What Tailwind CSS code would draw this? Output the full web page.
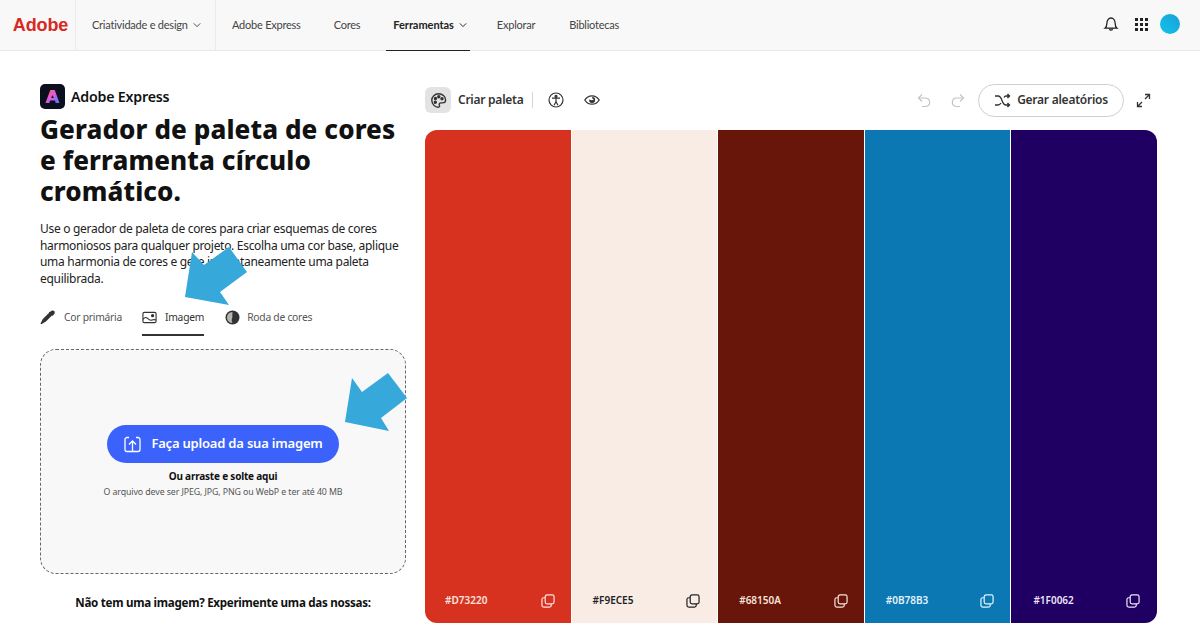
<!DOCTYPE html>
<html lang="pt">
<head>
<meta charset="UTF-8">
<meta name="viewport" content="width=device-width, initial-scale=1.0">
<title>Gerador de paleta de cores</title>
<script src="https://cdn.jsdelivr.net/npm/@tailwindcss/browser@4"></script>
</head>
<body class="relative h-[623px] overflow-hidden bg-white font-['Noto_Sans',sans-serif] text-[#222]">

<!-- top nav -->
<header class="flex h-[51px] items-stretch border-b border-[#e8e8e8] bg-[#f8f8f8] font-['Lato',sans-serif] text-[11px] tracking-[-0.23px] text-[#444]">
  <div class="flex w-[76px] items-center justify-center border-r border-[#ebebeb] pl-[6px] font-['Liberation_Sans',sans-serif] text-[18px] font-bold tracking-[-0.1px] text-[#d8291f]">Adobe</div>
  <div class="flex w-[140px] items-center gap-[5px] border-r border-[#ebebeb] pl-[16px]">
    Criatividade e design
    <svg class="h-2 w-2" viewBox="0 0 10 10" fill="none" stroke="currentColor" stroke-width="1.2"><path d="M1 3l4 4 4-4"/></svg>
  </div>
  <nav class="flex items-stretch">
    <a class="ml-[16px] flex items-center">Adobe Express</a>
    <a class="ml-[33px] flex items-center">Cores</a>
    <a class="-mb-px ml-[26px] flex items-center gap-[5px] border-b border-[#222] pr-[3px] pl-[7px] font-bold tracking-[-0.05px] text-[#222]">
      Ferramentas
      <svg class="h-2 w-2" viewBox="0 0 10 10" fill="none" stroke="currentColor" stroke-width="1.2"><path d="M1 3l4 4 4-4"/></svg>
    </a>
    <a class="ml-[27px] flex items-center">Explorar</a>
    <a class="ml-[34px] flex items-center">Bibliotecas</a>
  </nav>
  <div class="ml-auto flex items-center pr-[20px] pb-[2px]">
    <svg class="h-[16px] w-[16px] text-[#222]" viewBox="0 0 16 16" fill="none" stroke="currentColor" stroke-width="1.3"><path d="M2 12.2c1.2-1 1.8-2 1.800-4.500C3.800 4.500 5.600 2 8 2s4.200 2.500 4.200 5.700c0 2.500.6 3.500 1.800 4.500z"/><path d="M6.500 12.500c0 1 .7 1.700 1.500 1.700s1.500-.7 1.500-1.700"/></svg>
    <svg class="ml-[15px] h-[15px] w-[15px] text-[#222]" viewBox="0 0 15 15" fill="currentColor"><rect x="1" y="1" width="3" height="3"/><rect x="6" y="1" width="3" height="3"/><rect x="11" y="1" width="3" height="3"/><rect x="1" y="6" width="3" height="3"/><rect x="6" y="6" width="3" height="3"/><rect x="11" y="6" width="3" height="3"/><rect x="1" y="11" width="3" height="3"/><rect x="6" y="11" width="3" height="3"/><rect x="11" y="11" width="3" height="3"/></svg>
    <div class="ml-[11px] h-[20px] w-[20px] rounded-full bg-gradient-to-tr from-[#10c4e8] to-[#1a9fd8]"></div>
  </div>
</header>

<main class="flex gap-[19px] pl-[40px]">
  <!-- left column -->
  <section class="w-[366px] shrink-0 pt-[33px]">
    <div class="flex items-center gap-[6px]">
      <div class="flex h-[25px] w-[25px] items-center justify-center rounded-[5px] bg-[#0b0f1e]">
        <svg class="h-[15px] w-[15px]" viewBox="0 0 15 15"><defs><linearGradient id="expr" x1="0" y1="0" x2="1" y2="1"><stop offset="0" stop-color="#ff6a3e"/><stop offset=".45" stop-color="#e65ad8"/><stop offset="1" stop-color="#4a7bff"/></linearGradient></defs><path d="M5.300 1h4.400L14.500 14h-3.800L10 11.500H5L4.300 14H.5zM7.500 6 6.200 9h2.600z" fill="url(#expr)"/></svg>
      </div>
      <span class="text-[14.200px] font-semibold tracking-[-0.2px] text-[#111]">Adobe Express</span>
    </div>
    <h1 class="mt-[5px] text-[26px] leading-[31px] font-extrabold tracking-[0.1px] text-[#111]">Gerador de paleta de cores e ferramenta círculo cromático.</h1>
    <p class="mt-[14px] text-[12px] leading-[16.500px] tracking-[-0.3px] text-[#222]">Use o gerador de paleta de cores para criar esquemas de cores harmoniosos para qualquer projeto. Escolha uma cor base, aplique uma harmonia de cores e gere instantaneamente uma paleta equilibrada.</p>

    <div class="mt-[14px] flex h-[35px] items-stretch text-[10.300px] tracking-[-0.25px] text-[#555]">
      <div class="flex items-center gap-[7px] pb-[2px]">
        <svg class="h-[17px] w-[17px] text-[#333]" viewBox="0 0 17 17" fill="currentColor"><path d="M10.200 2.800c1.300-1.500 3-1.800 4-.8s.7 2.700-.8 4l-1 .9-.5-.5-5.200 5.400c-.9.9-1.700 1.500-3 1.900l-2.200 1.600-1.100-1.100 1.500-2.300c.4-1.300 1-2.100 1.900-3l5.400-5.200-.5-.5z"/></svg>
        Cor primária
      </div>
      <div class="ml-[20px] flex items-center gap-[8px] border-b-2 border-[#333] text-[#333]">
        <svg class="h-[15px] w-[15px]" viewBox="0 0 16 16" fill="none" stroke="currentColor" stroke-width="1.200"><rect x="1" y="2.500" width="14" height="11" rx="1.500"/><path d="M1 10c2-2.500 3.500-2.500 5-1s3 2.300 4.500 1.700 2.500-1 4.500 0"/><circle cx="11.300" cy="6" r="1.100" fill="currentColor"/></svg>
        Imagem
      </div>
      <div class="ml-[21px] flex items-center gap-[7px] pb-[2px]">
        <svg class="h-[15px] w-[15px]" viewBox="0 0 15 15"><circle cx="7.500" cy="7.500" r="7" fill="#333"/><path d="M7.500 2a5.500 5.500 0 0 0 0 11c-1-2-1-3-.2-5.500z" fill="#b5b5b5"/></svg>
        Roda de cores
      </div>
    </div>

    <div class="mt-[13px] flex h-[225px] flex-col items-center rounded-[16px] border border-dashed border-[#666] bg-[#f8f8f8] pt-[75px]">
      <button class="flex h-[38px] w-[232px] items-center justify-center gap-[9px] rounded-full bg-[#3b63fb] text-[13px] font-semibold tracking-[-0.2px] text-white">
        <svg class="h-[19px] w-[19px]" viewBox="0 0 19 19" fill="none" stroke="currentColor" stroke-width="1.300"><path d="M6 2.500H4A2 2 0 0 0 2 4.500v10a2 2 0 0 0 2 2h11a2 2 0 0 0 2-2v-10a2 2 0 0 0-2-2h-2"/><path d="M9.500 16V6M6 9.500l3.500-3.500 3.500 3.500"/></svg>
        Faça upload da sua imagem
      </button>
      <p class="mt-[6px] text-[10px] leading-[14px] font-bold tracking-[-0.2px] text-[#111]">Ou arraste e solte aqui</p>
      <p class="mt-[3px] text-[8.800px] leading-[13px] tracking-[-0.1px] text-[#555]">O arquivo deve ser JPEG, JPG, PNG ou WebP e ter até 40 MB</p>
    </div>

    <p class="mt-[21px] text-center text-[11.600px] leading-[16px] font-bold tracking-[-0.28px] text-[#111]">Não tem uma imagem? Experimente uma das nossas:</p>
  </section>

  <!-- palette column -->
  <section class="w-[732px] shrink-0">
    <div class="flex h-[79px] items-center pt-[28px] pr-[6px] pb-[9px]">
      <div class="flex h-[26px] w-[26px] items-center justify-center rounded-[6px] bg-[#e3e3e3]">
        <svg class="h-[17px] w-[17px] text-[#333]" viewBox="0 0 17 17" fill="none" stroke="currentColor" stroke-width="1.400"><path d="M8.500 1.800C4.700 1.800 1.800 4.700 1.800 8.300c0 3.700 3 6.900 6.400 6.900 1.500 0 1.700-1 1.200-2-.6-1.200.1-2.300 1.500-2.300h1.700c1.700 0 3-1 3-2.900 0-3.500-3.300-6.200-7.100-6.200z"/><circle cx="5.500" cy="6.500" r="1" fill="currentColor"/><circle cx="8.800" cy="4.800" r="1" fill="currentColor"/><circle cx="12" cy="6.800" r="1" fill="currentColor"/><circle cx="5.300" cy="10.300" r="1" fill="currentColor"/></svg>
      </div>
      <span class="ml-[7px] text-[12px] font-semibold tracking-[-0.25px] text-[#333]">Criar paleta</span>
      <div class="ml-[9px] h-[16px] w-px bg-[#d5d5d5]"></div>
      <svg class="ml-[15px] h-[16px] w-[16px] text-[#333]" viewBox="0 0 16 16" fill="none" stroke="currentColor" stroke-width="1.200"><circle cx="8" cy="8" r="7"/><circle cx="8" cy="4.300" r="1" fill="currentColor"/><path d="M4 6.200h8M8 6.200v3.500M8 9.700l-2 3.500M8 9.700l2 3.500"/></svg>
      <svg class="ml-[20px] h-[16px] w-[16px] text-[#333]" viewBox="0 0 16 16" fill="none" stroke="currentColor" stroke-width="1.300"><path d="M.8 8C2.500 5.300 5 3.800 8 3.800s5.500 1.500 7.200 4.200c-1.700 2.700-4.200 4.200-7.200 4.200S2.500 10.700.8 8z"/><path d="M5.200 7.500A3 3 0 1 0 8 5a2.500 2.500 0 0 0 2 2.500c-1.500 1-3.300.8-4.800 0z" fill="currentColor" stroke="none"/></svg>

      <div class="ml-auto flex items-center">
        <svg class="h-[15px] w-[15px] text-[#c4c4c4]" viewBox="0 0 15 15" fill="none" stroke="currentColor" stroke-width="1.200"><path d="M5 1.500 1.500 5 5 8.500"/><path d="M1.500 5H9a4.300 4.300 0 0 1 0 8.500H5"/></svg>
        <svg class="ml-[18px] h-[15px] w-[15px] text-[#c4c4c4]" viewBox="0 0 15 15" fill="none" stroke="currentColor" stroke-width="1.200"><path d="M10 1.500 13.500 5 10 8.500"/><path d="M13.500 5H6a4.300 4.300 0 0 0 0 8.500h4"/></svg>
        <button class="ml-[13px] flex h-[33px] w-[146px] items-center justify-center gap-[6px] rounded-full border border-[#cfcfcf] text-[12px] font-semibold tracking-[-0.25px] text-[#333]">
          <svg class="h-[17px] w-[17px]" viewBox="0 0 17 17" fill="none" stroke="currentColor" stroke-width="1.300"><path d="M1 4h3c2 0 3 1.500 4 4.500s2 4.500 4 4.500h3.500"/><path d="M1 13h3c1.300 0 2.200-.7 3-2M10 5.500C10.500 4.500 11 4 12 4h3.500"/><path d="M13.500 2l2 2-2 2M13.500 11l2 2-2 2" fill="currentColor"/></svg>
          Gerar aleatórios
        </button>
        <svg class="ml-[12px] h-[15px] w-[15px] text-[#333]" viewBox="0 0 15 15" fill="none" stroke="currentColor" stroke-width="1.300"><path d="M9 1.500h4.500V6M13.500 1.500 9 6M6 13.500H1.500V9M1.500 13.500 6 9"/></svg>
      </div>
    </div>

    <div class="flex h-[493px] gap-px overflow-hidden rounded-[12px] text-[10px] font-semibold">
      <div class="flex flex-1 items-end justify-between bg-[#d73220] pb-[15px] text-[#fbe4df]">
        <span class="ml-[20px]">#D73220</span>
        <svg class="mr-[16px] h-[14px] w-[14px]" viewBox="0 0 15 15" fill="none" stroke="currentColor" stroke-width="1.300"><rect x="4.500" y="1" width="9.500" height="9.500" rx="2"/><path d="M4.500 4H3a2 2 0 0 0-2 2v6a2 2 0 0 0 2 2h6a2 2 0 0 0 2-2v-1.500"/></svg>
      </div>
      <div class="flex flex-1 items-end justify-between bg-[#f9ece5] pb-[15px] text-[#222]">
        <span class="ml-[21px]">#F9ECE5</span>
        <svg class="mr-[17px] h-[14px] w-[14px]" viewBox="0 0 15 15" fill="none" stroke="currentColor" stroke-width="1.300"><rect x="4.500" y="1" width="9.500" height="9.500" rx="2"/><path d="M4.500 4H3a2 2 0 0 0-2 2v6a2 2 0 0 0 2 2h6a2 2 0 0 0 2-2v-1.500"/></svg>
      </div>
      <div class="flex flex-1 items-end justify-between bg-[#68150a] pb-[15px] text-[#f7e3dc]">
        <span class="ml-[21px]">#68150A</span>
        <svg class="mr-[16px] h-[14px] w-[14px]" viewBox="0 0 15 15" fill="none" stroke="currentColor" stroke-width="1.300"><rect x="4.500" y="1" width="9.500" height="9.500" rx="2"/><path d="M4.500 4H3a2 2 0 0 0-2 2v6a2 2 0 0 0 2 2h6a2 2 0 0 0 2-2v-1.500"/></svg>
      </div>
      <div class="flex flex-1 items-end justify-between bg-[#0b78b3] pb-[15px] text-[#e3f3fc]">
        <span class="ml-[21px]">#0B78B3</span>
        <svg class="mr-[16px] h-[14px] w-[14px]" viewBox="0 0 15 15" fill="none" stroke="currentColor" stroke-width="1.300"><rect x="4.500" y="1" width="9.500" height="9.500" rx="2"/><path d="M4.500 4H3a2 2 0 0 0-2 2v6a2 2 0 0 0 2 2h6a2 2 0 0 0 2-2v-1.500"/></svg>
      </div>
      <div class="flex flex-1 items-end justify-between bg-[#1f0062] pb-[15px] text-[#eee3fb]">
        <span class="ml-[22px]">#1F0062</span>
        <svg class="mr-[17px] h-[14px] w-[14px]" viewBox="0 0 15 15" fill="none" stroke="currentColor" stroke-width="1.300"><rect x="4.500" y="1" width="9.500" height="9.500" rx="2"/><path d="M4.500 4H3a2 2 0 0 0-2 2v6a2 2 0 0 0 2 2h6a2 2 0 0 0 2-2v-1.500"/></svg>
      </div>
    </div>
  </section>
</main>

<!-- annotation arrows over the page -->
<svg class="absolute top-0 left-0 h-[623px] w-[1200px]" viewBox="0 0 1200 623" fill="#36a8da">
  <polygon points="192,252 185,297 229,305 220,292 247,272 229,247 204,265"/>
  <polygon points="352,378 345,422 389,431 381,418 407,398 388,373 362,392"/>
</svg>
</body>
</html>
